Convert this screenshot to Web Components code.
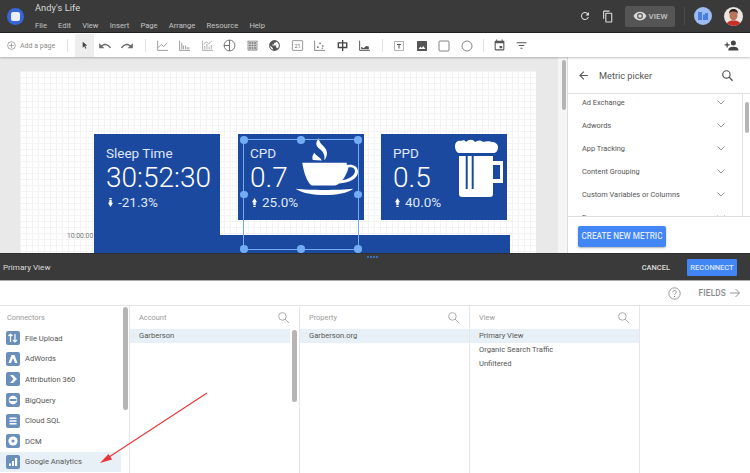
<!DOCTYPE html>
<html>
<head>
<meta charset="utf-8">
<title>Andy's Life</title>
<style>
  html, body { margin: 0; padding: 0; height: 100%; overflow: hidden; background: #fff; }
  body { font-family: Roboto, "Liberation Sans", sans-serif; }
</style>
</head>
<body>
<app-shell></app-shell>
<script>
// small helper so every element below gets an open shadow root from a string
function shadow(el, html) {
  el.attachShadow({ mode: 'open' }).innerHTML = html;
}

class AppHeader extends HTMLElement {
  connectedCallback() {
    const menu = ['File', 'Edit', 'View', 'Insert', 'Page', 'Arrange', 'Resource', 'Help'];
    shadow(this, `
      <style>
        :host { display: flex; height: 33px; background: #3a3a3a; color: #ddd; align-items: center; box-sizing: border-box; border-bottom: 1px solid #222; }
        .logo { width: 17px; height: 17px; margin-left: 7px; border-radius: 50%; background: #3766d8; display: flex; align-items: center; justify-content: center; }
        .logo i { display: block; width: 9px; height: 9px; border-radius: 2px; background: #e8eefb; }
        .names { margin-left: 11px; flex: 1; }
        .title { font-size: 9.2px; line-height: 12px; color: #d8d8d8; letter-spacing: .1px; }
        nav { display: flex; gap: 11.2px; font-size: 7.6px; line-height: 10px; margin-top: 7px; color: #c4c4c4; }
        .right { display: flex; align-items: center; }
        .ic { display: block; fill: #ddd; }
        .view { width: 50px; height: 21px; margin: 0 1px 0 10px; background: #555; border-radius: 2px; display: flex; align-items: center; justify-content: center; gap: 2px; font-size: 8px; font-weight: 500; color: #c4c4c4; }
        .sep { width: 1px; height: 18px; background: #4b4b4b; margin: 0 9px 0 8px; }
        .drive { width: 18px; height: 18px; border-radius: 50%; background: #9dbcf3; display: flex; align-items: center; justify-content: center; }
        .face { margin: 0 7px 0 12px; display: block; }
      </style>
      <div class="logo"><i></i></div>
      <div class="names">
        <div class="title">Andy's Life</div>
        <nav>${menu.map(m => `<span>${m}</span>`).join('')}</nav>
      </div>
      <div class="right">
        <svg class="ic" width="12" height="12" viewBox="0 0 24 24"><path d="M17.65 6.35A8 8 0 1 0 19.73 14h-2.08A6 6 0 1 1 12 6c1.66 0 3.14.69 4.22 1.78L13 11h7V4z"/></svg>
        <svg class="ic" style="margin-left:11px" width="13" height="13" viewBox="0 0 24 24"><path d="M14 1H4a2 2 0 0 0-2 2v13h2V3h10zm3 4H8a2 2 0 0 0-2 2v14a2 2 0 0 0 2 2h9a2 2 0 0 0 2-2V7a2 2 0 0 0-2-2zm0 16H8V7h9z"/></svg>
        <div class="view">
          <svg class="ic" width="14" height="14" viewBox="0 0 24 24"><path d="M12 4.5C7 4.5 2.73 7.61 1 12c1.73 4.39 6 7.5 11 7.5s9.27-3.11 11-7.5c-1.73-4.39-6-7.5-11-7.5zM12 17a5 5 0 1 1 0-10 5 5 0 0 1 0 10zm0-8a3 3 0 1 0 0 6 3 3 0 0 0 0-6z"/></svg>
          VIEW
        </div>
        <div class="sep"></div>
        <div class="drive"><svg width="10" height="10" viewBox="0 0 10 10"><path d="M0 1h4v8H0zM5 3.5h2V2h3v7H5z" fill="#4a7fe0"/></svg></div>
        <svg class="face" width="19" height="19" viewBox="0 0 19 19">
          <defs><clipPath id="c"><circle cx="9.5" cy="9.5" r="9.5"/></clipPath></defs>
          <g clip-path="url(#c)">
            <rect width="19" height="19" fill="#e9e6e2"/>
            <path d="M2 19c.5-4 3-5.5 7.5-5.5S16.5 15 17 19z" fill="#c8302a"/>
            <ellipse cx="9.5" cy="8.5" rx="4" ry="5" fill="#b9765a"/>
            <path d="M5 7c0-4 2.5-5 4.5-5S14 3 14 7c-1-2-3-2.5-4.5-2.5S6 5 5 7z" fill="#2b1f1b"/>
          </g>
        </svg>
      </div>
    `);
  }
}

const TB_ICONS = {
  select: '<path d="M8 4l10 8-4.5.6 2.6 5.4-2 1-2.6-5.5L8 17z" fill="#444"/>',
  undo: '<path d="M12.5 8c-2.6 0-5 1-6.9 2.6L2 7v9h9l-3.6-3.6c1.4-1.2 3.2-1.9 5.1-1.9 3.5 0 6.5 2.3 7.6 5.5l2.4-.8C21 11.9 17.1 8 12.5 8z" fill="#6a6a6a"/>',
  redo: '<path d="M11.5 8c2.6 0 5 1 6.9 2.6L22 7v9h-9l3.6-3.6c-1.4-1.2-3.2-1.9-5.1-1.9-3.5 0-6.5 2.3-7.6 5.5l-2.4-.8C3 11.9 6.9 8 11.5 8z" fill="#6a6a6a"/>',
  line: '<path d="M3 3v18h19M4 16l6-6 4 4 7-7" fill="none" stroke="#777" stroke-width="1.3"/>',
  bars: '<path d="M3 3v18h19M7 7v12M10 12v7M14 12v7M17 15v4M20 15v4" fill="none" stroke="#777" stroke-width="1.3"/>',
  combo: '<path d="M3 3v18h19M7 13v6M11 9v10M15 14v5M19 11v8M5 9l5-4 4 4 6-5" fill="none" stroke="#888" stroke-width="1.2"/>',
  pie: '<circle cx="12" cy="12" r="10" fill="none" stroke="#666" stroke-width="1.7"/><path d="M12 2V22M12 12H2" fill="none" stroke="#666" stroke-width="1.7"/>',
  table: '<rect x="3" y="3" width="18" height="18" rx="1" fill="#777"/><path d="M5 5h14v14H5zM9.7 5v14M14.3 5v14M5 9.7h14M5 14.3h14" fill="none" stroke="#eee" stroke-width="1.3"/>',
  globe: '<path d="M12 2a10 10 0 1 0 0 20 10 10 0 0 0 0-20zm-1 18a8 8 0 0 1-7-8l5 5v1a2 2 0 0 0 2 2zm6.900-2.500A2 2 0 0 0 16 16h-1v-3a1 1 0 0 0-1-1H8v-2h2a1 1 0 0 0 1-1V7h2a2 2 0 0 0 2-2v-.4a8 8 0 0 1 2.900 12.900z" fill="#555"/>',
  score: '<rect x="2.5" y="3" width="19" height="18" rx="1" fill="none" stroke="#777" stroke-width="1.4"/><text x="12" y="16" font-size="10" text-anchor="middle" fill="#666" font-family="Roboto">21</text>',
  scatter: '<path d="M3 3v18h19" fill="none" stroke="#666" stroke-width="1.4"/><circle cx="9" cy="15" r="1.5" fill="#555"/><circle cx="13" cy="8" r="1.5" fill="#555"/><circle cx="18" cy="13" r="1.5" fill="#555"/><circle cx="17" cy="17" r="1.2" fill="#555"/>',
  pivot: '<path d="M11 2h2.500v4H21v11h-7.500v5H11v-5H3V6h8zM5.500 8.500v6H11v-6zm8 0v6h5v-6z" fill="#444"/>',
  area: '<path d="M3 3v18h19" fill="none" stroke="#555" stroke-width="1.8"/><path d="M6 19v-5l4 3 5-4 5 1v5z" fill="#555"/>',
  text: '<path d="M3 3h18v18H3z" fill="none" stroke="#999" stroke-width="1.5"/><path d="M8 8h8v2h-3v7h-2v-7H8z" fill="#555"/>',
  image: '<rect x="2" y="2" width="20" height="20" rx="1" fill="#555"/><path d="M5 18l4-5 2.500 3 3-4 4.500 6z" fill="#fff"/>',
  rect: '<rect x="2" y="2" width="20" height="20" rx="2" fill="none" stroke="#666" stroke-width="1.6"/>',
  circle: '<circle cx="12" cy="12" r="10" fill="none" stroke="#666" stroke-width="1.6"/>',
  date: '<path d="M19 3h-1V1h-2v2H8V1H6v2H5a2 2 0 0 0-2 2v14a2 2 0 0 0 2 2h14a2 2 0 0 0 2-2V5a2 2 0 0 0-2-2zm0 16H5V8h14zM12 13h5v4h-5z" fill="#555"/>',
  filter: '<path d="M3 6h18v2H3zM7 11h10v2H7zM10 16h4v2h-4z" fill="#555"/>',
  add: '<path d="M15 12a4 4 0 1 0 0-8 4 4 0 0 0 0 8zm-9-2V7H4v3H1v2h3v3h2v-3h3v-2zm9 4c-2.700 0-8 1.300-8 4v2h16v-2c0-2.700-5.300-4-8-4z" fill="#444"/>'
};

class TbIcon extends HTMLElement {
  connectedCallback() {
    const s = this.getAttribute('size') || 13;
    shadow(this, `
      <style>:host { display: flex; width: 22.5px; height: 23px; align-items: center; justify-content: center; flex: none; } svg { display: block; }</style>
      <svg width="${s}" height="${s}" viewBox="0 0 24 24">${TB_ICONS[this.getAttribute('name')]}</svg>
    `);
  }
}

class AppToolbar extends HTMLElement {
  connectedCallback() {
    const icon = (n, s) => `<tb-icon name="${n}"${s ? ` size="${s}"` : ''}></tb-icon>`;
    shadow(this, `
      <style>
        :host { display: flex; height: 24px; padding-top: 1px; background: #fff; align-items: center; box-sizing: border-box; color: #888; position: relative; z-index: 2; box-shadow: 0 1px 2px rgba(0,0,0,.25); }
        .add { display: flex; align-items: center; gap: 4px; font-size: 7px; margin-left: 7px; width: 60px; color: #8a8a8a; flex: none; }
        .add svg { display: block; }
        .sep { width: 1px; height: 13px; background: #e2e2e2; flex: none; }
        .sel { background: #eee; margin-left: 7px; width: 18.5px; }
        .group { display: flex; flex: none; }
        .sp { flex: 1; }
      </style>
      <div class="add">
        <svg width="9" height="9" viewBox="0 0 10 10"><circle cx="5" cy="5" r="4.3" fill="none" stroke="#888" stroke-width=".8"/><path d="M5 2.5v5M2.5 5h5" stroke="#888" stroke-width=".8"/></svg>
        Add a page
      </div>
      <div class="sep"></div>
      <tb-icon name="select" size="11" class="sel"></tb-icon>
      ${icon('undo', 14)}${icon('redo', 14)}
      <div class="sep" style="margin-left:6.5px"></div>
      <div class="group" style="margin:0 6px 0 5px">
        ${['line', 'bars', 'combo', 'pie', 'table', 'globe', 'score', 'scatter', 'pivot', 'area'].map(n => icon(n, 13)).join('')}
      </div>
      <div class="sep"></div>
      <div class="group" style="margin:0 5px 0 5px">${['text', 'image', 'rect', 'circle'].map(n => icon(n, 12)).join('')}</div>
      <div class="sep"></div>
      <div class="group" style="margin-left:4px">${icon('date', 13)}${icon('filter', 13)}</div>
      <div class="sp"></div>
      <div style="margin-right:7px">${icon('add', 15)}</div>
    `);
  }
}

class ScoreCard extends HTMLElement {
  connectedCallback() {
    const down = this.hasAttribute('down');
    shadow(this, `
      <style>
        :host { display: block; position: absolute; width: 126px; height: 86px; background: #1c49a0; color: #fff; box-sizing: border-box; padding: 11px 0 0 12px; }
        .label { font-size: 13.5px; line-height: 16px; color: #dfe7f6; }
        .val { font-size: 28px; line-height: 30px; margin-top: 2px; font-weight: 300; }
        .delta { display: flex; align-items: center; font-size: 13.5px; line-height: 15px; margin-top: 2px; color: #dfe7f6; }
        svg.a { display: block; margin-right: 5px; margin-left: 2px; }
        ::slotted(svg) { position: absolute; left: 0; top: 0; }
      </style>
      <div class="label">${this.getAttribute('label')}</div>
      <div class="val">${this.getAttribute('value')}</div>
      <div class="delta">
        <svg class="a" width="5" height="9" viewBox="0 0 5 9"><path d="${down ? 'M1.3 0h2.4v1H1.3zM1.3 1.7h2.4v3H5L2.5 9 0 4.7h1.3z' : 'M1.3 9h2.4V8H1.3zM1.3 7.3h2.4v-3H5L2.5 0 0 4.300h1.3z'}" fill="#fff"/></svg>
        ${this.getAttribute('delta')}
      </div>
      <slot></slot>
    `);
  }
}

class SelectionBox extends HTMLElement {
  connectedCallback() {
    const pts = [[0, 0], [50, 0], [100, 0], [0, 50], [100, 50], [0, 100], [50, 100], [100, 100]];
    shadow(this, `
      <style>
        :host { display: block; position: absolute; box-sizing: border-box; border: 1.5px solid #74acf3; }
        i { position: absolute; width: 7.5px; height: 7.5px; border-radius: 50%; background: #74acf3; margin: -3.75px 0 0 -3.75px; }
      </style>
      ${pts.map(p => `<i style="left:${p[0]}%;top:${p[1]}%"></i>`).join('')}
    `);
  }
}

class ReportCanvas extends HTMLElement {
  connectedCallback() {
    shadow(this, `
      <style>
        :host { display: block; flex: 1; position: relative; overflow: hidden; background: #e9e9e9; }
        .page { position: absolute; left: 20px; top: 14px; width: 516px; height: 300px; background-color: #fff;
          background-image: linear-gradient(#f3f3f3 1px, transparent 1px), linear-gradient(90deg, #f3f3f3 1px, transparent 1px);
          background-size: 6px 6px; }
        .chart { position: absolute; background: #1c49a0; }
        .tick { position: absolute; left: 47px; top: 160px; font-size: 6.8px; color: #777; line-height: 10px; }
        .scroll { position: absolute; right: 0; top: 0; bottom: 0; width: 9px; background: #f5f5f5; }
        .scroll i { position: absolute; left: 4px; top: 3px; width: 4px; height: 50px; border-radius: 2px; background: #b5b5b5; }
      </style>
      <div class="page">
        <div class="chart" style="left:74px;top:63px;width:126px;height:104px"></div>
        <div class="chart" style="left:74px;top:164px;width:416px;height:30px"></div>
        <div class="tick">10:00:00</div>
        <score-card label="Sleep Time" value="30:52:30" delta="-21.3%" down style="left:74px;top:63px"></score-card>
        <score-card label="CPD" value="0.7" delta="25.0%" style="left:218px;top:63px">
          <svg width="126" height="86" viewBox="0 0 126 86" fill="#fff">
            <path d="M81 4C77 8.700 77.700 12 82 15.300C85.300 18 87 20.700 86.300 26.300C90.300 21.300 89.700 16.300 85.300 12C82 9 81 7.300 81 4z"/>
            <path d="M76.300 18.700C73.700 22 74.300 25.300 75 26L84 26.500C82 23 78 21.500 76.300 18.700z"/>
            <path fill-rule="evenodd" d="M64.300 28.700H108.700V31C115 30 120 32 120 38C120 44 112 49 101 49.500C100 50.500 98 51.300 97 51.500H73.700C68.700 48 65.700 38 64.300 28.700zM110.300 33.500C110 37 107 43 104.300 46.300C111 45 116.500 42 117 37.300C117 33.500 113.500 32.500 110.300 33.500z"/>
            <path d="M57.700 54.700C72 56.300 100 56.300 115.300 54.700C110 59 98 61 87 61C76 61 63 59 57.700 54.700z"/>
          </svg>
        </score-card>
        <score-card label="PPD" value="0.5" delta="40.0%" style="left:361px;top:63px">
          <svg width="126" height="86" viewBox="0 0 126 86" fill="#fff">
            <path d="M74 12c0-4 3-6 6-5 2-1 4-1 5 1 3-3 7-3 9 0 3-2 6-2 8 0 3-1 7-1 9 0 3 0 6 2 6 5 0 4-2 6-5 6H78c-2 0-4-3-4-7z"/>
            <path fill-rule="evenodd" d="M78 22h34v5h10v22h-10v11c0 2-1 3-3 3H81c-2 0-3-1-3-3zM112 31v14h7V31zM84.700 22v33h2V22zM90.700 22v33h2V22z"/>
          </svg>
        </score-card>
        <selection-box style="left:223px;top:68px;width:116px;height:111px"></selection-box>
      </div>
      <div class="scroll"><i></i></div>
    `);
  }
}

class MetricPicker extends HTMLElement {
  connectedCallback() {
    const rows = ['Ad Exchange', 'Adwords', 'App Tracking', 'Content Grouping', 'Custom Variables or Columns', 'Ecommerce'];
    shadow(this, `
      <style>
        :host { display: flex; flex-direction: column; flex: none; width: 183px; background: #fff; position: relative; box-sizing: border-box; border-left: 1px solid #ddd; color: #555; }
        .head { height: 37px; flex: none; display: flex; align-items: center; box-sizing: border-box; border-bottom: 1px solid #ddd; }
        .head .t { font-size: 9.2px; margin-left: 9px; flex: 1; color: #555; }
        .head svg { display: block; }
        .list { height: 123px; flex: none; overflow: hidden; border-bottom: 1px solid #ddd; position: relative; box-sizing: border-box; }
        .row { height: 23px; display: flex; align-items: center; font-size: 7.4px; padding-left: 14px; color: #555; }
        .row span { flex: 1; }
        .row svg { margin-right: 25px; display: block; }
        .rows { margin-top: -3.5px; }
        .bar { position: absolute; right: 0; top: 0; bottom: 0; width: 7px; background: #fff; border-left: 1px solid #e3e3e3; }
        .bar i { position: absolute; left: 2px; top: 8px; width: 4px; height: 31px; border-radius: 2px; background: #b5b5b5; }
        .foot { flex: 1; padding: 9px 0 0 10px; }
        button { all: unset; display: block; box-sizing: border-box; width: 88px; height: 21px; text-align: center; background: #4285f4; color: #dfe9fb; font: 500 8.2px/21px Roboto, sans-serif; border-radius: 2px; box-shadow: 0 1px 2px rgba(0,0,0,.3); }
      </style>
      <div class="head">
        <svg style="margin-left:9px" width="13" height="13" viewBox="0 0 24 24"><path d="M20 11H7.800l5.600-5.600L12 4l-8 8 8 8 1.400-1.400L7.800 13H20z" fill="#555"/></svg>
        <div class="t">Metric picker</div>
        <svg style="margin-right:16px" width="13" height="13" viewBox="0 0 24 24"><circle cx="10" cy="10" r="6.8" fill="none" stroke="#555" stroke-width="2.2"/><path d="M15 15l6.500 6.500" stroke="#555" stroke-width="2.6"/></svg>
      </div>
      <div class="list">
        <div class="rows">
        ${rows.map(r => `<div class="row"><span>${r}</span><svg width="8" height="5" viewBox="0 0 8 5"><path d="M.5.5 4 4 7.5.5" fill="none" stroke="#999" stroke-width="1"/></svg></div>`).join('')}
        </div>
        <div class="bar"><i></i></div>
      </div>
      <div class="foot"><button>CREATE NEW METRIC</button></div>
    `);
  }
}

class DataBar extends HTMLElement {
  connectedCallback() {
    shadow(this, `
      <style>
        :host { display: flex; flex: none; height: 28px; background: #3a3a3a; color: #ddd; align-items: center; position: relative; box-sizing: border-box; border-top: 1px solid #2e2e2e; border-bottom: 1px solid #aaa; }
        .t { flex: 1; font-size: 8.1px; padding-left: 3px; color: #ddd; }
        .cancel { font-size: 7.5px; font-weight: 500; margin-right: 17px; color: #ddd; }
        .re { width: 50px; height: 17px; margin-right: 13px; background: #4285f4; border-radius: 1px; font-size: 7.5px; font-weight: 500; line-height: 17px; text-align: center; color: #dde8fb; }
        .grip { position: absolute; left: 367px; top: 2px; display: flex; gap: 1px; }
        .grip i { width: 2px; height: 2px; background: #3f6cc0; }
      </style>
      <div class="grip"><i></i><i></i><i></i><i></i></div>
      <div class="t">Primary View</div>
      <div class="cancel">CANCEL</div>
      <div class="re">RECONNECT</div>
    `);
  }
}

class FieldsBar extends HTMLElement {
  connectedCallback() {
    shadow(this, `
      <style>
        :host { display: flex; flex: none; height: 25px; align-items: center; justify-content: flex-end; background: #fff; box-sizing: border-box; border-bottom: 1px solid #e6e6e6; color: #888; }
        svg { display: block; }
        .f { font-size: 8.2px; font-weight: 500; letter-spacing: .2px; margin: 0 3px 0 18px; color: #888; }
      </style>
      <svg width="13" height="13" viewBox="0 0 24 24"><circle cx="12" cy="12" r="10.5" fill="none" stroke="#888" stroke-width="1.6"/><path d="M8.800 9.500c0-4 6.500-4 6.500 0 0 2.500-3.300 2.500-3.300 5M12 16.500v2" fill="none" stroke="#888" stroke-width="1.8"/></svg>
      <span class="f">FIELDS</span>
      <svg style="margin-right:9px" width="12" height="12" viewBox="0 0 24 24"><path d="M2 12h19M13 4l8 8-8 8" fill="none" stroke="#888" stroke-width="1.8"/></svg>
    `);
  }
}

const CONN_ICONS = {
  upload: '<path d="M4.5 11V3M2.5 5l2-2 2 2M9 3v8M7 9l2 2 2-2" fill="none" stroke="#fff" stroke-width="1.2"/>',
  adwords: '<path d="M5.5 3h3l3 8H9L7 6l-2 5H2.500z" fill="#fff"/>',
  attr: '<path d="M4 3h3l4 4-4 4H4l3.500-4z" fill="#fff"/>',
  bq: '<circle cx="7" cy="7" r="4.3" fill="#fff"/><rect x="3.5" y="6" width="7" height="2" fill="#6a8fbb"/>',
  sql: '<path d="M3.5 3.500h7v1.600h-7zM3.500 6.200h7v1.600h-7zM3.500 8.900h7v1.600h-7z" fill="#fff"/>',
  dcm: '<circle cx="7" cy="7" r="4.6" fill="#fff"/><circle cx="7" cy="7" r="1.5" fill="#6a8fbb"/>',
  ga: '<path d="M3 11V8.500h2V11zM6 11V6h2v5zM9 11V3h2.200v8z" fill="#fff"/>'
};

class ConnectorItem extends HTMLElement {
  connectedCallback() {
    shadow(this, `
      <style>
        :host { display: flex; align-items: center; height: 20.6px; padding-left: 6px; font-size: 7.6px; color: #555; box-sizing: border-box; }
        :host([active]) { background: #e8f0f7; }
        .ic { width: 14px; height: 14px; background: #6a8fbb; border-radius: 2px; margin-right: 5px; flex: none; }
        svg { display: block; }
      </style>
      <div class="ic"><svg width="14" height="14" viewBox="0 0 14 14">${CONN_ICONS[this.getAttribute('icon')]}</svg></div>
      <slot></slot>
    `);
  }
}

class ConnectorList extends HTMLElement {
  connectedCallback() {
    shadow(this, `
      <style>
        :host { display: block; flex: none; width: 130px; position: relative; box-sizing: border-box; border-right: 1px solid #e6e6e6; overflow: hidden; }
        .h { font-size: 7.4px; color: #999; padding: 7px 0 0 7px; height: 22px; box-sizing: border-box; }
        .items { width: 121px; }
        .bar { position: absolute; left: 123px; top: 1px; width: 5px; height: 103px; border-radius: 3px; background: #b5b5b5; }
      </style>
      <div class="h">Connectors</div>
      <div class="items"><slot></slot></div>
      <div class="bar"></div>
    `);
  }
}

class PickColumn extends HTMLElement {
  connectedCallback() {
    const items = (this.getAttribute('items') || '').split('|');
    const bar = this.hasAttribute('scroll');
    shadow(this, `
      <style>
        :host { display: block; flex: none; width: 170px; position: relative; box-sizing: border-box; border-right: 1px solid #e6e6e6; }
        .h { height: 23px; display: flex; align-items: center; padding: 0 9px 0 9px; font-size: 7.4px; color: #999; }
        .h span { flex: 1; }
        svg { display: block; }
        .r { height: 13.8px; line-height: 13.8px; padding-left: 9px; font-size: 7.6px; color: #555; }
        .r.on { background: #e8f0f7; }
        :host([scroll]) .r.on { margin-right: 9px; }
        .bar { position: absolute; right: 2px; top: 24px; width: 5px; height: 72px; border-radius: 3px; background: #b5b5b5; }
      </style>
      <div class="h"><span>${this.getAttribute('title')}</span>
        <svg width="13" height="13" viewBox="0 0 24 24"><circle cx="10" cy="10" r="7" fill="none" stroke="#aaa" stroke-width="1.8"/><path d="M15 15l7 7" stroke="#aaa" stroke-width="1.8"/></svg>
      </div>
      ${items.map((t, i) => `<div class="r${i === 0 ? ' on' : ''}">${t}</div>`).join('')}
      ${bar ? '<div class="bar"></div>' : ''}
    `);
  }
}

class AppShell extends HTMLElement {
  connectedCallback() {
    shadow(this, `
      <style>
        :host { display: flex; flex-direction: column; width: 750px; height: 473px; overflow: hidden; position: relative; background: #fff; }
        .mid { display: flex; height: 196px; flex: none; }
        .cols { display: flex; flex: 1; min-height: 0; }
        .arrow { position: absolute; left: 0; top: 0; pointer-events: none; }
      </style>
      <app-header></app-header>
      <app-toolbar></app-toolbar>
      <div class="mid">
        <report-canvas></report-canvas>
        <metric-picker></metric-picker>
      </div>
      <data-bar></data-bar>
      <fields-bar></fields-bar>
      <div class="cols">
        <connector-list>
          <connector-item icon="upload">File Upload</connector-item>
          <connector-item icon="adwords">AdWords</connector-item>
          <connector-item icon="attr">Attribution 360</connector-item>
          <connector-item icon="bq">BigQuery</connector-item>
          <connector-item icon="sql">Cloud SQL</connector-item>
          <connector-item icon="dcm">DCM</connector-item>
          <connector-item icon="ga" active>Google Analytics</connector-item>
        </connector-list>
        <pick-column title="Account" items="Garberson" scroll></pick-column>
        <pick-column title="Property" items="Garberson.org"></pick-column>
        <pick-column title="View" items="Primary View|Organic Search Traffic|Unfiltered"></pick-column>
      </div>
      <svg class="arrow" width="750" height="473" viewBox="0 0 750 473">
        <path d="M207 393 106 459" stroke="#e8333a" stroke-width="1.1" fill="none"/>
        <path d="M100 463l8.500-9 3.500 5.500z" fill="#e8333a"/>
      </svg>
    `);
  }
}

customElements.define('app-header', AppHeader);
customElements.define('tb-icon', TbIcon);
customElements.define('app-toolbar', AppToolbar);
customElements.define('score-card', ScoreCard);
customElements.define('selection-box', SelectionBox);
customElements.define('report-canvas', ReportCanvas);
customElements.define('metric-picker', MetricPicker);
customElements.define('data-bar', DataBar);
customElements.define('fields-bar', FieldsBar);
customElements.define('connector-item', ConnectorItem);
customElements.define('connector-list', ConnectorList);
customElements.define('pick-column', PickColumn);
customElements.define('app-shell', AppShell);
</script>
</body>
</html>
